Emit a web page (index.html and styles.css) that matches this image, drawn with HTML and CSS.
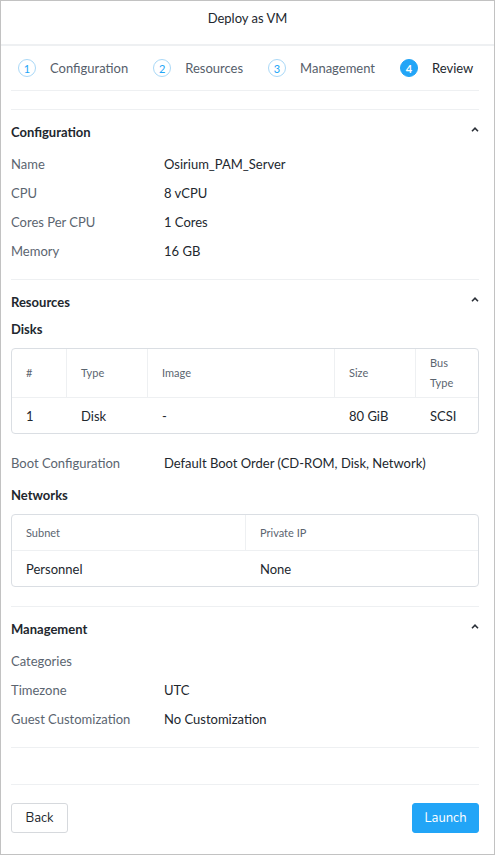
FILE: index.html
```html
<!DOCTYPE html>
<html lang="en">
<head>
<meta charset="utf-8">
<title>Deploy as VM</title>
<link rel="stylesheet" href="styles.css">
</head>
<body>
<div class="dialog">
  <div class="header">Deploy as VM</div>
  <div class="body">
    <div class="steps">
      <div class="step"><span class="num">1</span><span class="label">Configuration</span></div>
      <div class="step"><span class="num">2</span><span class="label">Resources</span></div>
      <div class="step"><span class="num">3</span><span class="label">Management</span></div>
      <div class="step active"><span class="num">4</span><span class="label">Review</span></div>
    </div>
    <div class="spacer"></div>

    <section class="section">
      <div class="sec-head"><span>Configuration</span><svg class="chev" width="8" height="5" viewBox="0 0 8 5"><polyline points="1,4.2 4,1.2 7,4.2" fill="none" stroke="#2b3038" stroke-width="1.6"/></svg></div>
      <div class="row"><span class="k">Name</span><span class="v">Osirium_PAM_Server</span></div>
      <div class="row"><span class="k">CPU</span><span class="v">8 vCPU</span></div>
      <div class="row"><span class="k">Cores Per CPU</span><span class="v">1 Cores</span></div>
      <div class="row"><span class="k">Memory</span><span class="v">16 GB</span></div>
    </section>

    <section class="section res">
      <div class="sec-head"><span>Resources</span><svg class="chev" width="8" height="5" viewBox="0 0 8 5"><polyline points="1,4.2 4,1.2 7,4.2" fill="none" stroke="#2b3038" stroke-width="1.6"/></svg></div>
      <div class="sub">Disks</div>
      <div class="table disks">
        <div class="tr th">
          <div class="c c1">#</div>
          <div class="c c2">Type</div>
          <div class="c c3">Image</div>
          <div class="c c4">Size</div>
          <div class="c c5">Bus<br>Type</div>
        </div>
        <div class="tr td">
          <div class="c c1">1</div>
          <div class="c c2">Disk</div>
          <div class="c c3">-</div>
          <div class="c c4">80 GiB</div>
          <div class="c c5">SCSI</div>
        </div>
      </div>
      <div class="row boot"><span class="k">Boot Configuration</span><span class="v">Default Boot Order (CD-ROM, Disk, Network)</span></div>
      <div class="sub">Networks</div>
      <div class="table nets">
        <div class="tr th">
          <div class="c n1">Subnet</div>
          <div class="c n2">Private IP</div>
        </div>
        <div class="tr td">
          <div class="c n1">Personnel</div>
          <div class="c n2">None</div>
        </div>
      </div>
    </section>

    <section class="section mgmt">
      <div class="sec-head"><span>Management</span><svg class="chev" width="8" height="5" viewBox="0 0 8 5"><polyline points="1,4.2 4,1.2 7,4.2" fill="none" stroke="#2b3038" stroke-width="1.6"/></svg></div>
      <div class="row"><span class="k">Categories</span><span class="v"></span></div>
      <div class="row"><span class="k">Timezone</span><span class="v">UTC</span></div>
      <div class="row"><span class="k">Guest Customization</span><span class="v">No Customization</span></div>
    </section>

    <div class="gap"></div>
    <div class="footer">
      <button class="btn back">Back</button>
      <button class="btn launch">Launch</button>
    </div>
  </div>
</div>
</body>
</html>
```
FILE: styles.css
```css
html, body {
  margin: 0;
  padding: 0;
  background: #ffffff;
}
body {
  font-family: "Lato", "Open Sans", sans-serif;
  font-size: 13px;
  color: #22272e;
}
.dialog {
  width: 495px;
  height: 855px;
  box-sizing: border-box;
  border: 1px solid #c2c2c2;
  display: flex;
  flex-direction: column;
}
.header {
  height: 45px;
  box-sizing: border-box;
  padding-top: 8px;
  text-align: center;
  font-size: 13px;
  line-height: 18px;
  color: #22272e;
  border-bottom: 2px solid #eef0f2;
}
.body {
  flex: 1;
  display: flex;
  flex-direction: column;
  padding: 0 15px 0 10px;
}
.steps {
  height: 44px;
  display: flex;
  align-items: center;
  gap: 25px;
  padding-left: 7px;
  border-bottom: 1px solid #eef0f2;
}
.step {
  display: flex;
  align-items: center;
  gap: 14px;
}
.num {
  width: 18px;
  height: 18px;
  box-sizing: border-box;
  border: 1px solid #a9d8f7;
  border-radius: 50%;
  color: #22a5f7;
  font-size: 11px;
  display: flex;
  align-items: center;
  justify-content: center;
  line-height: 1;
}
.label {
  color: #56606b;
  font-size: 13px;
}
.step.active .num {
  background: #22a5f7;
  border-color: #22a5f7;
  color: #fff;
  font-weight: 700;
}
.step.active .label {
  color: #22272e;
}
.spacer {
  height: 18px;
  border-bottom: 1px solid #eef0f2;
}
.section {
  padding: 14px 0 14px;
  border-bottom: 1px solid #eef0f2;
}
.sec-head {
  height: 16px;
  line-height: 16px;
  display: flex;
  justify-content: space-between;
  align-items: center;
  font-weight: 700;
  color: #22272e;
  margin-bottom: 9px;
}
.chev {
  margin-top: -5px;
}
.row {
  height: 29px;
  display: flex;
  align-items: center;
}
.k {
  width: 153px;
  color: #5b6570;
}
.v {
  color: #22272e;
}
.sub {
  height: 16px;
  line-height: 16px;
  font-weight: 700;
  color: #22272e;
}
.res .sub {
  margin-bottom: 11px;
}
.res .sec-head {
  margin-bottom: 11px;
}
.res {
  padding-bottom: 19px;
}
.table {
  border: 1px solid #dadee3;
  border-radius: 4px;
}
.tr {
  display: flex;
  box-sizing: border-box;
}
.th {
  color: #5b6570;
  font-size: 11px;
  border-bottom: 1px solid #eef0f2;
}
.th .c {
  border-right: 1px solid #eef0f2;
}
.th .c:last-child {
  border-right: none;
}
.c {
  box-sizing: border-box;
  padding: 0 14px;
  display: flex;
  align-items: center;
}
.disks .th {
  height: 49px;
  line-height: 20px;
}
.disks .td, .nets .td {
  height: 35px;
}
.c1 { width: 55px; }
.c2 { width: 81px; }
.c3 { width: 187px; }
.c4 { width: 81px; }
.c5 { flex: 1; }
.nets .th {
  height: 36px;
}
.n1 { width: 234px; }
.n2 { flex: 1; }
.boot {
  margin-top: 14px;
  margin-bottom: 10px;
}
.gap {
  height: 36px;
}
.footer {
  border-top: 1px solid #eef0f2;
  padding-top: 18px;
  display: flex;
  justify-content: space-between;
}
.btn {
  height: 30px;
  box-sizing: border-box;
  border-radius: 3px;
  font-family: "Nunito", "Lato", sans-serif;
  font-size: 13px;
  padding: 0 10px;
  cursor: pointer;
}
.back {
  background: #fff;
  border: 1px solid #d6d9dd;
  color: #22272e;
  width: 57px;
}
.launch {
  background: #22a5f7;
  border: 1px solid #22a5f7;
  color: #fff;
  width: 67px;
}
```
